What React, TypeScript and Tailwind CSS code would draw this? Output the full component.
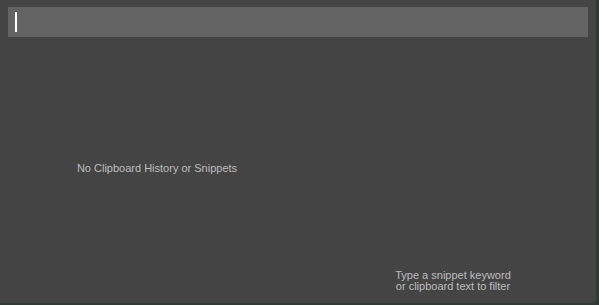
import React from "react";

export default function App() {
  return (
    <div className="w-[599px] h-[305px] bg-[#2f3a33] flex overflow-hidden" style={{ fontFamily: '"Liberation Sans", Arial, sans-serif' }}>
      <div className="w-[596px] h-[303px] bg-[#444444] rounded-br-[4px] flex flex-col">
        <div className="pt-[7px] px-[8px]">
          <div className="h-[30px] bg-[#636363] flex items-center pl-[7px]">
            <div className="w-[2px] h-[20px] bg-white" />
          </div>
        </div>
        <div className="flex flex-1">
          <div className="w-[314px] flex items-center justify-center pb-[4px]">
            <span className="text-[11px] text-[#bdbdbd]">No Clipboard History or Snippets</span>
          </div>
          <div className="flex-1 flex flex-col justify-end items-center pb-[11px] pr-[4px]">
            <div className="text-[11px] leading-[11px] text-[#bdbdbd] text-center">
              Type a snippet keyword
              <br />
              or clipboard text to filter
            </div>
          </div>
        </div>
      </div>
    </div>
  );
}
